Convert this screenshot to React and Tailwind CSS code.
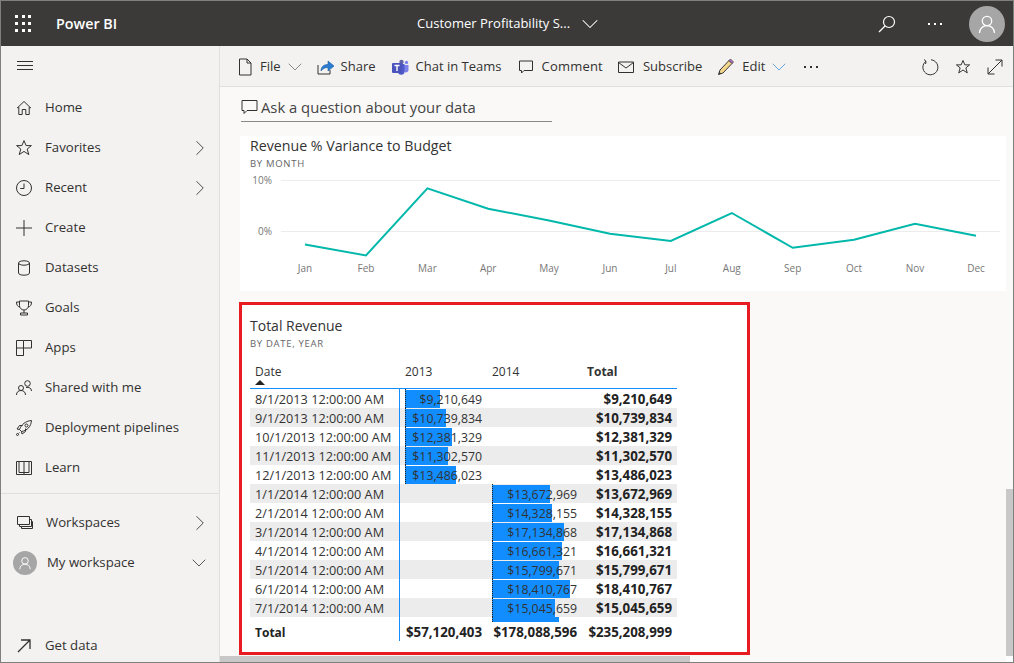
import React from 'react';
import { ChevronRight, ChevronDown } from 'lucide-react';

const Ico = ({ w = 18, h = 18, vb = '0 0 18 18', className = '', children }) => (
  <svg width={w} height={h} viewBox={vb} fill="none" stroke="#323130" strokeWidth="1" className={`shrink-0 ${className}`}>
    {children}
  </svg>
);

const HomeIcon = () => (
  <Ico><path d="M2 9.200 9 2.500l7 6.700M3.800 8v7.500h3.400v-5h3.600v5h3.400V8" /></Ico>
);
const StarIcon = () => (
  <Ico><path d="M9 1.600l2.100 5h5.300l-4.200 3.400 1.600 5.600L9 12.400l-4.800 3.200 1.600-5.600L1.600 6.600h5.300z" /></Ico>
);
const ClockIcon = () => (
  <Ico><circle cx="9" cy="9" r="7.500" /><path d="M9 4.500V9.500H5.200" /></Ico>
);
const PlusIcon = () => (
  <Ico><path d="M1 9h16M9 1v16" /></Ico>
);
const DataIcon = () => (
  <Ico><path d="M3.500 4v10c0 1.200 2.400 2.200 5.500 2.200s5.500-1 5.500-2.200V4" /><ellipse cx="9" cy="4" rx="5.500" ry="2.200" /></Ico>
);
const TrophyIcon = () => (
  <Ico><path d="M4.500 2h9v4.500c0 2.600-2 4.500-4.500 4.500S4.500 9.100 4.500 6.500zM4.500 3H1.500c0 3 1 4.600 3.500 5M13.500 3h3c0 3-1 4.600-3.500 5M9 11v3M5.500 14h7v2h-7z" /></Ico>
);
const AppsIcon = () => (
  <Ico><path d="M1.500 1.500h7v15h-7zM1.500 9h15V1.500h-8M8.500 9v7.500" /></Ico>
);
const SharedIcon = () => (
  <Ico><circle cx="12.500" cy="4.500" r="2.800" /><circle cx="6" cy="9" r="2.500" /><path d="M1.500 16c0-3 2-4.500 4.500-4.500s4.500 1.500 4.500 4.500M11 8.500c3-.8 5.500.8 5.500 3.500" /></Ico>
);
const RocketIcon = () => (
  <Ico><path d="M6.500 12.500 4.500 10.500C6.500 5.500 10.500 2 16.500 1.500 16 7.500 12.500 11.500 6.500 12.500zM4.500 10.500 2 10l2.500-3.500h3M6.500 12.500 7 15l3.500-2.500v-3" /><circle cx="11.500" cy="6.500" r="1.500" /><circle cx="2.500" cy="15.500" r="1" /><path d="M4.500 13.500 3.500 14.500" /></Ico>
);
const BookIcon = () => (
  <Ico><path d="M1.500 2.500h15v13h-15zM4 2.500v11h5v2M14 2.500v11H9M9 2.500v11" /></Ico>
);
const WorkspacesIcon = () => (
  <Ico><path d="M1.500 2.500h12v8h-12zM3.500 10.500v2h12v-7h-2M5.500 12.500v2h11v-7h-1" /></Ico>
);
const GetDataIcon = () => (
  <Ico><path d="M3 15 15 3M6 3h9v9" strokeWidth="1.300" /></Ico>
);

const PersonGlyph = ({ size }) => (
  <svg width={size} height={size} viewBox="0 0 20 20" fill="none" stroke="#fff" strokeWidth="1.300">
    <circle cx="10" cy="7" r="4.700" />
    <path d="M2.500 19c0-4.500 3.300-7.300 7.500-7.300s7.500 2.800 7.500 7.300" />
  </svg>
);

const NavItem = ({ icon: Icon, label, chevron }) => (
  <div className="h-10 flex items-center pl-[14px] pr-[6px] text-[13.200px] text-[#323130]">
    <span className="w-[30px] flex"><Icon /></span>
    <span className="flex-1">{label}</span>
    {chevron && <ChevronRight size={26} strokeWidth={0.8} className="text-[#323130]" />}
  </div>
);

const Sidebar = () => (
  <aside className="w-[219px] shrink-0 bg-[#f3f2f1] border-r border-[#e1dfdd] flex flex-col">
    <div className="h-10 flex items-center pl-[15px] mb-[2px]">
      <svg width="18" height="12" viewBox="0 0 18 12" stroke="#323130" strokeWidth="1"><path d="M1 1.500h16M1 5.500h16M1 9.500h16" /></svg>
    </div>
    <NavItem icon={HomeIcon} label="Home" />
    <NavItem icon={StarIcon} label="Favorites" chevron />
    <NavItem icon={ClockIcon} label="Recent" chevron />
    <NavItem icon={PlusIcon} label="Create" />
    <NavItem icon={DataIcon} label="Datasets" />
    <NavItem icon={TrophyIcon} label="Goals" />
    <NavItem icon={AppsIcon} label="Apps" />
    <NavItem icon={SharedIcon} label="Shared with me" />
    <NavItem icon={RocketIcon} label="Deployment pipelines" />
    <NavItem icon={BookIcon} label="Learn" />
    <div className="mt-[5px] border-t border-[#e1dfdd] mb-[9px]" />
    <div className="h-10 flex items-center pl-[15px] pr-[6px] text-[13.200px] text-[#323130]">
      <span className="w-[30px] flex"><WorkspacesIcon /></span>
      <span className="flex-1">Workspaces</span>
      <ChevronRight size={26} strokeWidth={0.8} />
    </div>
    <div className="h-10 flex items-center pl-3 pr-[8px] text-[13.200px] text-[#323130]">
      <span className="w-6 h-6 rounded-full bg-[#a6a6a6] flex items-center justify-center mr-[10px]"><PersonGlyph size={14} /></span>
      <span className="flex-1">My workspace</span>
      <ChevronDown size={24} strokeWidth={0.8} />
    </div>
    <div className="mt-auto h-[32px] flex items-center pl-[14px] text-[13.200px] text-[#323130]">
      <span className="w-[30px] flex"><GetDataIcon /></span>
      <span>Get data</span>
    </div>
  </aside>
);

const Header = () => (
  <header className="h-[45px] shrink-0 bg-[#3b3a39] flex items-center text-white relative">
    <div className="ml-[14px] grid grid-cols-3 gap-[4px] w-[16px]">
      {[0, 1, 2, 3, 4, 5, 6, 7, 8].map(i => <span key={i} className="w-[3px] h-[3px] bg-white" />)}
    </div>
    <span className="ml-[25px] text-[14.300px] font-semibold">Power BI</span>
    <div className="flex items-center ml-[300px] text-[13px]">
      <span className="w-[156px] whitespace-nowrap">Customer Profitability S...</span>
      <ChevronDown size={28} strokeWidth={0.9} className="ml-[3px]" />
    </div>
    <div className="ml-auto flex items-center pr-[8px]">
      <svg width="18" height="18" viewBox="0 0 18 18" fill="none" stroke="#fff" strokeWidth="1.200"><circle cx="11" cy="7" r="5.500" /><path d="M7 11 1 17" /></svg>
      <div className="flex gap-[4px] ml-[32px]">
        <span className="w-[2px] h-[2px] bg-white" /><span className="w-[2px] h-[2px] bg-white" /><span className="w-[2px] h-[2px] bg-white" />
      </div>
      <div className="ml-[27px] w-9 h-9 rounded-full bg-[#a6a6a6] flex items-center justify-center"><PersonGlyph size={20} /></div>
    </div>
  </header>
);

const ToolText = ({ children, className = '' }) => (
  <span className={`text-[13px] text-[#323130] ${className}`}>{children}</span>
);

const Toolbar = () => (
  <div className="h-[41px] shrink-0 bg-[#f3f2f1] border-b border-[#e1dfdd] flex items-center pl-[18px] pt-[2px]">
    <Ico w={14} h={18} vb="0 0 14 18"><path d="M1.500 1h7.500l4 4v12H1.500zM9 1v4h4" /></Ico>
    <ToolText className="ml-[8px]">File</ToolText>
    <ChevronDown size={24} strokeWidth={0.7} className="ml-[2px] text-[#605e5c]" />
    <svg width="18" height="16" viewBox="0 0 18 16" fill="none" className="ml-[10px] shrink-0">
      <path d="M1 6v9h12v-4" stroke="#323130" />
      <path d="M4 12c0-4 2.500-6.500 7-6.500V2l6 5-6 5V8.500c-3 0-5 1-7 3.500z" fill="#2b7cd3" stroke="#1b5a9b" strokeWidth=".6" />
    </svg>
    <ToolText className="ml-[6px]">Share</ToolText>
    <svg width="17" height="16" viewBox="0 0 17 16" className="ml-[16px] shrink-0">
      <circle cx="9.500" cy="3" r="2.200" fill="#6264a7" />
      <circle cx="14.500" cy="3.500" r="1.700" fill="#7b83eb" />
      <path d="M12 6h4.500v5a2.500 2.500 0 0 1-4.500 1.500z" fill="#7b83eb" />
      <path d="M6 5h6.500v7.500a3.200 3.200 0 0 1-6.500 0z" fill="#5059c9" />
      <rect x="0" y="4" width="10" height="10" rx="1" fill="#4b53bc" />
      <path d="M2.500 6.500h5M5 6.500v5.500" stroke="#fff" strokeWidth="1.400" />
    </svg>
    <ToolText className="ml-[7px] w-[87px] whitespace-nowrap">Chat in Teams</ToolText>
    <Ico w={16} h={16} vb="0 0 16 16" className="ml-[15px]"><path d="M1.500 2h13v9.500H6L3.500 14v-2.500h-2z" /></Ico>
    <ToolText className="ml-[8px] tracking-[0.2px]">Comment</ToolText>
    <Ico w={16} h={14} vb="0 0 16 14" className="ml-[15px]"><path d="M.500 2h15v10.500H.500zM.500 2.500 8 8l7.500-5.500" /></Ico>
    <ToolText className="ml-[9px]">Subscribe</ToolText>
    <svg width="17" height="18" viewBox="0 0 17 18" className="ml-[15px] shrink-0">
      <path d="M3 12 12 2.500l3 3L6 15l-4.500 1.500z" fill="#f3d68a" stroke="#3b3a39" />
      <path d="M12 2.500l1.500-1.500 3 3L15 5.500z" fill="#b86fc6" stroke="#3b3a39" strokeWidth=".7" />
      <path d="M1.500 16.500 2.300 13.800l2 2z" fill="#3b3a39" />
    </svg>
    <ToolText className="ml-[8px]">Edit</ToolText>
    <ChevronDown size={24} strokeWidth={0.7} className="ml-[2px] text-[#2b88d8]" />
    <div className="flex gap-[4px] ml-[13px]">
      <span className="w-[2px] h-[2px] bg-[#323130]" /><span className="w-[2px] h-[2px] bg-[#323130]" /><span className="w-[2px] h-[2px] bg-[#323130]" />
    </div>
    <div className="ml-auto flex items-center gap-[16px] pr-[10px]">
      <Ico w={18} h={18} vb="0 0 18 18"><path d="M5 3.200A7.500 7.500 0 1 0 10 1.800M3 1.500l2 1.800-.4 2.700" /></Ico>
      <Ico w={16} h={16} vb="0 0 18 18"><path d="M9 1.600l2.100 5h5.300l-4.200 3.400 1.600 5.600L9 12.400l-4.800 3.200 1.600-5.600L1.600 6.600h5.300z" strokeWidth="1.100" /></Ico>
      <Ico w={16} h={16} vb="0 0 16 16"><path d="M1 15 15 1M8.500 1H15v6.500M1 8.500V15h6.500" /></Ico>
    </div>
  </div>
);

const months = ['Jan', 'Feb', 'Mar', 'Apr', 'May', 'Jun', 'Jul', 'Aug', 'Sep', 'Oct', 'Nov', 'Dec'];
const points = [[305, 244.4], [366, 255.4], [427.4, 188.4], [488.2, 208.7], [549, 220.5], [610, 233.7], [670.8, 241], [731.8, 213], [792.7, 247.8], [854, 239.7], [915, 223.8], [976, 235.8]];

const RevenueChart = () => (
  <div className="ml-5 w-[766px] h-[155px] bg-white shrink-0">
    <div className="pl-[10px] h-[36px]">
      <div className="text-[14.200px] leading-[19px] text-[#333] whitespace-nowrap">Revenue % Variance to Budget</div>
      <div className="text-[9.500px] leading-[14px] mt-[2px] tracking-[0.7px] font-medium text-[#666]">BY MONTH</div>
    </div>
    <svg width="766" height="119" viewBox="240 172 766 119" className="block" style={{ fontFamily: '"Open Sans", sans-serif' }}>
      <path d="M281 180.500H1000M281 231.500H1000" stroke="#ececec" />
      <text x="272" y="184" textAnchor="end" fontSize="10" fill="#777">10%</text>
      <text x="272" y="235" textAnchor="end" fontSize="10" fill="#777">0%</text>
      <polyline points={points.map(p => p.join(',')).join(' ')} fill="none" stroke="#01b8aa" strokeWidth="2" />
      {months.map((m, i) => (
        <text key={m} x={points[i][0]} y="272" textAnchor="middle" fontSize="10" fill="#777">{m}</text>
      ))}
    </svg>
  </div>
);

const rows = [
  ['8/1/2013 12:00:00 AM', '$9,210,649', '', '$9,210,649', 35, 0],
  ['9/1/2013 12:00:00 AM', '$10,739,834', '', '$10,739,834', 41, 0],
  ['10/1/2013 12:00:00 AM', '$12,381,329', '', '$12,381,329', 47, 0],
  ['11/1/2013 12:00:00 AM', '$11,302,570', '', '$11,302,570', 43, 0],
  ['12/1/2013 12:00:00 AM', '$13,486,023', '', '$13,486,023', 51, 0],
  ['1/1/2014 12:00:00 AM', '', '$13,672,969', '$13,672,969', 0, 58],
  ['2/1/2014 12:00:00 AM', '', '$14,328,155', '$14,328,155', 0, 60],
  ['3/1/2014 12:00:00 AM', '', '$17,134,868', '$17,134,868', 0, 72],
  ['4/1/2014 12:00:00 AM', '', '$16,661,321', '$16,661,321', 0, 70],
  ['5/1/2014 12:00:00 AM', '', '$15,799,671', '$15,799,671', 0, 67],
  ['6/1/2014 12:00:00 AM', '', '$18,410,767', '$18,410,767', 0, 78],
  ['7/1/2014 12:00:00 AM', '', '$15,045,659', '$15,045,659', 0, 63],
];

// cell with the data bar lying under its number
const BarCell = ({ value, bar, width }) => (
  <div className={`relative h-full text-right pr-[5px] text-[12.300px] ${width}`}>
    {bar > 0 && <div className="absolute left-[5px] top-px h-[18px] bg-[#118dff]" style={{ width: bar }} />}
    {bar > 0 && <div className="absolute left-[5px] inset-y-0 border-l border-dotted border-[#222]" />}
    <span className="relative">{value}</span>
  </div>
);

const RevenueTable = () => (
  <div className="ml-[19px] mt-[11px] w-[511px] h-[353px] shrink-0 border-[3px] border-[#e81b23] bg-white pl-2 text-[#333]">
    <div className="text-[14px] leading-[19px] mt-[11px]">Total Revenue</div>
    <div className="text-[9.500px] leading-[14px] mt-[2px] tracking-[0.7px] font-medium text-[#666]">BY DATE, YEAR</div>
    <div className="w-[427px] mt-[9px] text-[12px] leading-[19px]">
      <div className="h-[29px] flex border-b border-[#118dff]">
        <div className="w-[150px] pl-[5px] pt-[2px] relative">
          Date
          <svg width="10" height="5" viewBox="0 0 10 5" className="absolute left-[5px] top-[20px]"><path d="M0 5 5 0l5 5z" fill="#252423" /></svg>
        </div>
        <div className="w-[87px] pl-[5px] pt-[2px]">2013</div>
        <div className="w-[95px] pl-[5px] pt-[2px]">2014</div>
        <div className="w-[95px] pl-[5px] pt-[2px] font-bold">Total</div>
      </div>
      {rows.map((r, i) => (
        <div key={r[0]} className={`h-[19px] flex leading-[21px] ${i % 2 === 1 ? 'bg-[#ececec]' : ''}`}>
          <div className="w-[150px] pl-[5px] border-r border-[#118dff] whitespace-nowrap text-[12.700px]">{r[0]}</div>
          <BarCell value={r[1]} bar={r[4]} width="w-[87px]" />
          <BarCell value={r[2]} bar={r[5]} width="w-[95px]" />
          <div className="w-[95px] text-right pr-[5px] font-bold text-[13.300px] text-[#222]">{r[3]}</div>
        </div>
      ))}
      <div className="h-[5px] flex">
        <div className="w-[150px] border-r border-[#118dff]" />
        <div className="w-[87px]" />
        <div className="w-[95px] relative">
          <div className="absolute left-[5px] top-0 h-[5px] w-[67px] bg-[#118dff]" />
          <div className="absolute left-[5px] inset-y-0 border-l border-dotted border-[#222]" />
        </div>
      </div>
      <div className="h-[19px] flex leading-[21px] font-bold text-[13.300px] text-[#222]">
        <div className="w-[150px] pl-[5px] border-r border-[#118dff] text-[12px]">Total</div>
        <div className="w-[87px] text-right pr-[5px]">$57,120,403</div>
        <div className="w-[95px] text-right pr-[5px] whitespace-nowrap">$178,088,596</div>
        <div className="w-[95px] text-right pr-[5px] whitespace-nowrap">$235,208,999</div>
      </div>
    </div>
  </div>
);

const App = () => (
  <div className="w-[1014px] h-[663px] border border-[#7f7f7f] flex flex-col overflow-hidden bg-[#faf9f8]" style={{ fontFamily: '"Open Sans", "Liberation Sans", sans-serif' }}>
    <Header />
    <div className="flex-1 flex min-h-0">
      <Sidebar />
      <div className="flex-1 flex flex-col min-w-0">
        <Toolbar />
        <div className="flex-1 flex min-h-0">
          <main className="flex-1 flex flex-col min-w-0 overflow-hidden">
            <div className="ml-[21px] mt-[10px] w-[311px] h-[25px] border-b border-[#8a8886] flex items-center pb-[4px] mb-[14px] shrink-0">
              <Ico w={17} h={16} vb="0 0 17 16"><path d="M1 1.500h15v10H6l-3 3v-3H1z" /></Ico>
              <span className="ml-[3px] text-[14.800px] leading-[20px] text-[#444] whitespace-nowrap">Ask a question about your data</span>
            </div>
            <RevenueChart />
            <RevenueTable />
          </main>
          <div className="w-[7px] shrink-0 flex flex-col justify-end">
            <div className="h-[167px] bg-[#c8c8c8]" />
          </div>
        </div>
        <div className="h-[6px] shrink-0 flex">
          <div className="w-[470px] bg-[#c8c8c8]" />
          <div className="flex-1" />
          <div className="w-[7px] bg-white" />
        </div>
      </div>
    </div>
  </div>
);

export default App;
